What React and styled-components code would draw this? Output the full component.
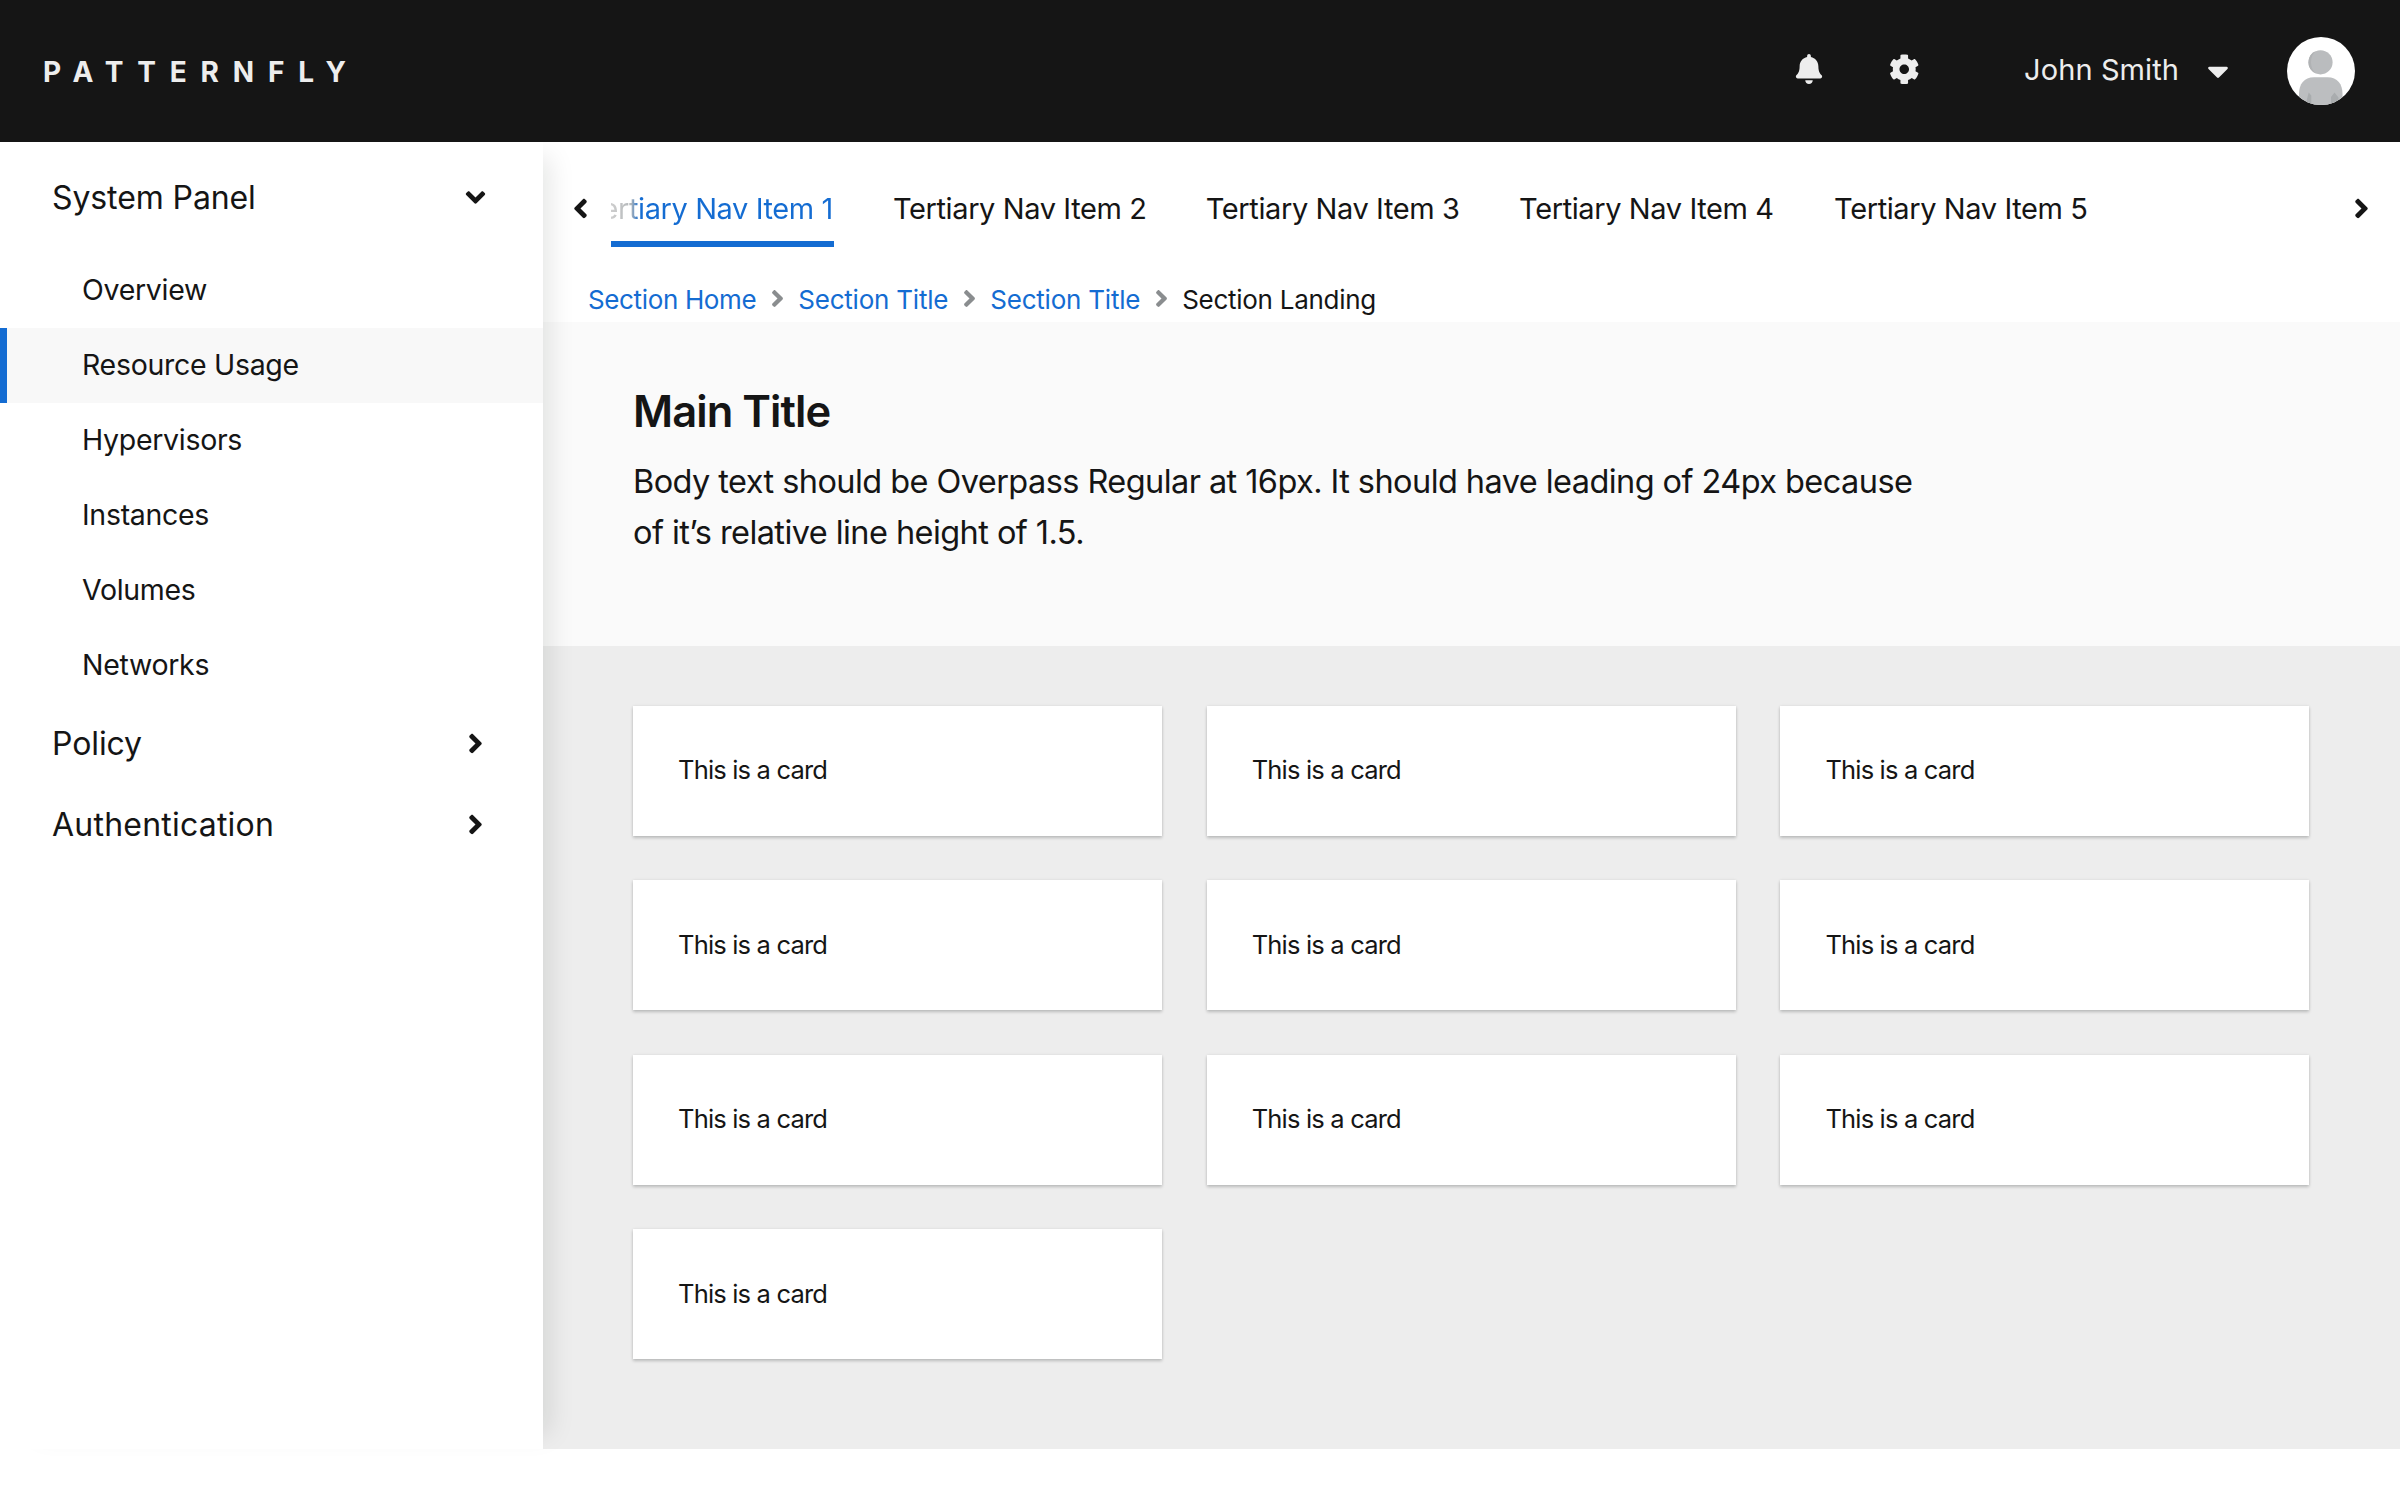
import React from "react";
import styled, { createGlobalStyle } from "styled-components";
import { FaAngleDown, FaAngleLeft, FaAngleRight, FaBell, FaCaretDown, FaCog } from "react-icons/fa";

const GlobalStyle = createGlobalStyle`
  *, *::before, *::after { box-sizing: border-box; }
  body {
    margin: 0;
    background: #fff;
    color: #151515;
    font-family: Inter, "Liberation Sans", sans-serif;
  }
  a { color: inherit; text-decoration: none; }
  ul, ol { list-style: none; margin: 0; padding: 0; }
  svg { display: block; flex: none; }
`;

const Page = styled.div`
  width: 2400px;
  height: 1500px;
  overflow: hidden;
  background: #fff;
`;

const Masthead = styled.header`
  position: relative;
  z-index: 2;
  display: flex;
  align-items: center;
  justify-content: space-between;
  height: 142px;
  padding: 0 45px 0 42px;
  background: #151515;
  color: #ededed;
`;

const Brand = styled.a`
  padding: 2px 0 0 1px;
  font-size: 28px;
  font-weight: 700;
  line-height: 40px;
  letter-spacing: 13.8px;
`;

const Tools = styled.div`
  display: flex;
  align-items: center;
`;

const IconButton = styled.button`
  display: flex;
  justify-content: center;
  width: 31px;
  margin: 0 ${(p) => p.$gap}px 4px 0;
  padding: 0;
  border: 0;
  background: none;
  color: inherit;
  font-size: ${(p) => p.$size}px;
`;

const UserMenu = styled.button`
  display: flex;
  align-items: center;
  margin: 0 52px 0 40px;
  padding: 0;
  border: 0;
  background: none;
  color: inherit;
  font: inherit;
  font-size: 29px;
  line-height: 40px;
  letter-spacing: 0.1px;

  svg { font-size: 34px; }
`;

const UserName = styled.span`
  width: 177px;
  padding-bottom: 3px;
  text-align: left;
  white-space: nowrap;
`;

const Body = styled.div`
  display: grid;
  grid-template-columns: 543px 1fr;
  height: 1307px;
`;

const Sidebar = styled.nav`
  position: relative;
  z-index: 1;
  padding-top: 15px;
  background: #fff;
  box-shadow: 22px 0 24px -15px rgba(3, 18, 12, 0.1);
`;

const GroupToggle = styled.a`
  display: flex;
  align-items: center;
  justify-content: space-between;
  height: 81px;
  padding: 0 52px;
  font-size: 32px;
  letter-spacing: ${(p) => p.$track || 0}px;

  svg { font-size: 31px; }
`;

const SubList = styled.ul`
  padding-top: 15px;
`;

const SubItem = styled.li`
  display: flex;
  align-items: center;
  height: 75px;
  padding: 0 0 3px 75px;
  border-left: 7px solid ${(p) => (p.$current ? "#146cd2" : "transparent")};
  background: ${(p) => (p.$current ? "#f8f8f8" : "transparent")};
  font-size: 28.5px;
  letter-spacing: -0.3px;
`;

const Main = styled.main`
  display: flex;
  flex-direction: column;
  min-width: 0;
`;

const TabBar = styled.nav`
  display: flex;
  align-items: flex-end;
  height: 105px;
  padding: 0 23px 0 22px;
`;

const ScrollButton = styled.button`
  display: flex;
  align-items: center;
  width: 31px;
  height: 65px;
  margin: 0 ${(p) => p.$gap || 0}px 6px 0;
  padding: 0;
  border: 0;
  background: none;
  color: #151515;
  font-size: 31px;
`;

const Tabs = styled.ul`
  display: grid;
  grid-template-columns: 282px 312.8px 313.3px 315px 313px;
  flex: 1;
  overflow: hidden;
`;

const Tab = styled.li`
  display: flex;
  justify-content: ${(p) => (p.$current ? "flex-end" : "flex-start")};
  width: ${(p) => (p.$current ? "223px" : "auto")};
  padding-right: ${(p) => (p.$current ? "1px" : "0")};
  overflow: hidden;
  border-bottom: 6px solid ${(p) => (p.$current ? "#146cd2" : "transparent")};
  font-size: 29px;
  line-height: 65px;
  letter-spacing: -0.4px;
  white-space: nowrap;
`;

const FadingLabel = styled.span`
  color: #146cd2;
  background: linear-gradient(to left, #146cd2 194px, #b4b8ba 202px, #cfcfcf 223px);
  background-clip: text;
  -webkit-text-fill-color: transparent;
`;

const Breadcrumb = styled.ol`
  display: flex;
  height: 75px;
  padding: 35px 0 0 45px;
`;

const Crumb = styled.li`
  display: flex;
  align-items: center;
  height: 34px;
  color: ${(p) => (p.$current ? "#151515" : "#146cd2")};
  font-size: 26px;
  letter-spacing: ${(p) => p.$track}px;

  svg {
    margin: 0 7.5px 1px;
    color: #8a8d8f;
    font-size: 27px;
  }
`;

const Intro = styled.section`
  height: 324px;
  padding: 59px 0 0 90px;
  background: #fafafa;
`;

const Title = styled.h1`
  margin: 0 0 15px;
  font-size: 43.5px;
  font-weight: 600;
  line-height: 60px;
  letter-spacing: -0.95px;
`;

const Lead = styled.p`
  width: 1300px;
  margin: 0;
  font-size: 32.5px;
  line-height: 51px;
  letter-spacing: -0.57px;
`;

const Gallery = styled.section`
  flex: 1;
  display: grid;
  grid-template-columns: repeat(3, 529px);
  grid-auto-rows: 129.8px;
  gap: 44.6px 44.7px;
  padding: 60px 0 0 90px;
  background: #ededed;
`;

const Card = styled.article`
  display: flex;
  align-items: center;
  padding: 0 45px 2px;
  background: #fff;
  box-shadow: 0 2px 3px rgba(3, 12, 8, 0.2), 0 0 3px rgba(3, 12, 8, 0.08);
  font-size: 25.5px;
  letter-spacing: -0.82px;
`;

function Avatar() {
  return (
    <svg width="68" height="68" viewBox="0 0 68 68" role="img" aria-label="User avatar">
      <defs>
        <clipPath id="avatarDisc"><circle cx="34" cy="34" r="34" /></clipPath>
      </defs>
      <g clipPath="url(#avatarDisc)">
        <rect width="68" height="68" fill="#fff" />
        <circle cx="33.5" cy="25.3" r="12.1" fill="#babcbe" />
        <path d="M24 25.3c0-5 2-9 5-11.200A12.100 12.100 0 0 0 29 36.500c-3-2.200-5-6.200-5-11.200z" fill="#b0b2b4" />
        <path d="M12 68V57c0-10 5-16.800 15-16.800h13.500c10 0 15 6.800 15 16.800v11z" fill="#bcbec0" />
        <path d="M18.500 68l3.200-12.500 2.600 3V68zM44 68v-8l3.500-4.500 4 5V68z" fill="#a9acae" />
      </g>
    </svg>
  );
}

const subItems = ["Overview", "Resource Usage", "Hypervisors", "Instances", "Volumes", "Networks"];
const crumbs = [
  { label: "Section Home", track: -0.36 },
  { label: "Section Title", track: -0.22 },
  { label: "Section Title", track: -0.22 },
];

export default function App() {
  return (
    <Page>
      <GlobalStyle />
      <Masthead>
        <Brand href="#">PATTERNFLY</Brand>
        <Tools>
          <IconButton $size={30} $gap={65} aria-label="Notifications"><FaBell /></IconButton>
          <IconButton $size={30.5} $gap={64} aria-label="Settings"><FaCog /></IconButton>
          <UserMenu>
            <UserName>John Smith</UserName>
            <FaCaretDown />
          </UserMenu>
          <Avatar />
        </Tools>
      </Masthead>
      <Body>
        <Sidebar>
          <GroupToggle href="#" $track={-0.1}>System Panel<FaAngleDown /></GroupToggle>
          <SubList>
            {subItems.map((label) => (
              <SubItem key={label} $current={label === "Resource Usage"}>
                <a href="#">{label}</a>
              </SubItem>
            ))}
          </SubList>
          <GroupToggle href="#" $track={-0.1}>Policy<FaAngleRight /></GroupToggle>
          <GroupToggle href="#" $track={0.22}>Authentication<FaAngleRight /></GroupToggle>
        </Sidebar>
        <Main>
          <TabBar>
            <ScrollButton $gap={15} aria-label="Scroll left"><FaAngleLeft /></ScrollButton>
            <Tabs>
              <Tab $current><FadingLabel>Tertiary Nav Item 1</FadingLabel></Tab>
              {[2, 3, 4, 5].map((n) => (
                <Tab key={n}>Tertiary Nav Item {n}</Tab>
              ))}
            </Tabs>
            <ScrollButton aria-label="Scroll right"><FaAngleRight /></ScrollButton>
          </TabBar>
          <Breadcrumb>
            {crumbs.map(({ label, track }, i) => (
              <Crumb key={i} $track={track}><a href="#">{label}</a><FaAngleRight /></Crumb>
            ))}
            <Crumb $current $track={-0.28}>Section Landing</Crumb>
          </Breadcrumb>
          <Intro>
            <Title>Main Title</Title>
            <Lead>
              Body text should be Overpass Regular at 16px. It should have leading of 24px because
              of it’s relative line height of 1.5.
            </Lead>
          </Intro>
          <Gallery>
            {Array.from({ length: 10 }, (_, i) => (
              <Card key={i}>This is a card</Card>
            ))}
          </Gallery>
        </Main>
      </Body>
    </Page>
  );
}
